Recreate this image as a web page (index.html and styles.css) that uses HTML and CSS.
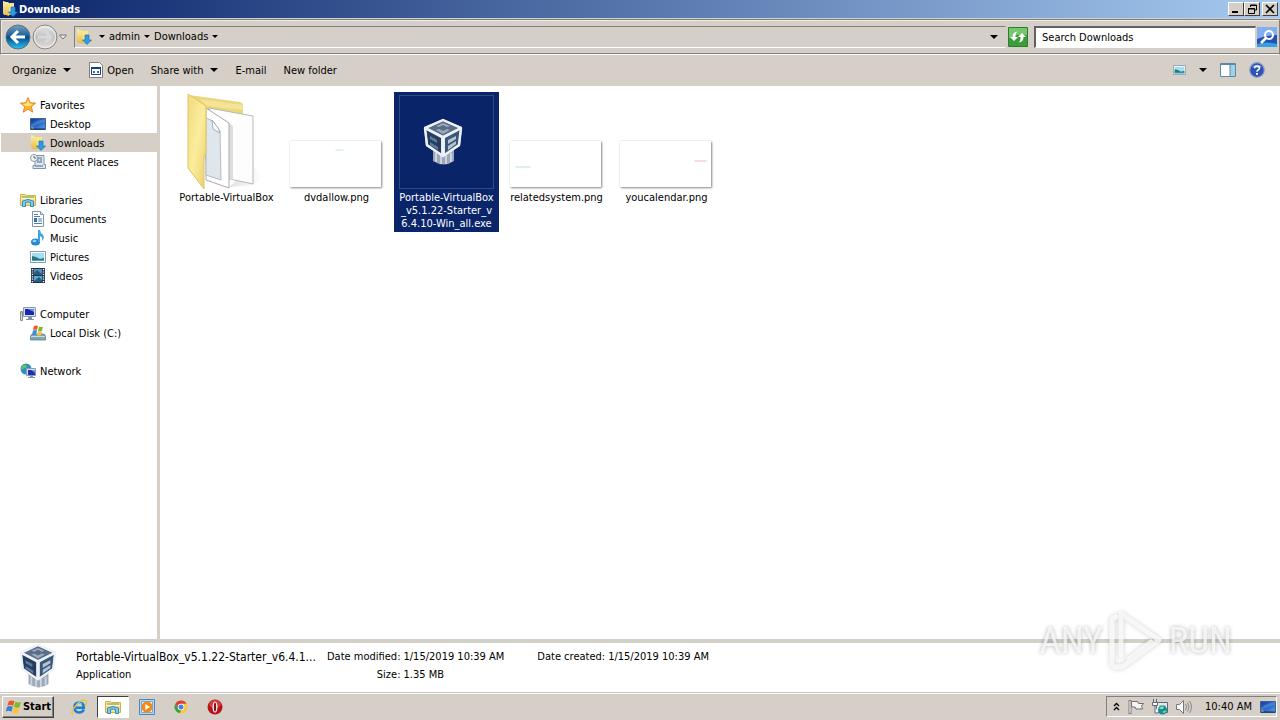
FILE: index.html
```html
<!DOCTYPE html>
<html lang="en">
<head>
<meta charset="utf-8">
<title>Downloads</title>
<link rel="stylesheet" href="styles.css">
</head>
<body>
<svg class="defs" aria-hidden="true">
  <defs>
    <linearGradient id="gFolder" x1="0" y1="0" x2="0" y2="1"><stop offset="0" stop-color="#fdf0a4"/><stop offset="1" stop-color="#e3bb45"/></linearGradient>
    <linearGradient id="gFront" x1="0" y1="0" x2="1" y2="1"><stop offset="0" stop-color="#f0da7c"/><stop offset=".5" stop-color="#fbed9e"/><stop offset="1" stop-color="#ecd06a"/></linearGradient>
    <linearGradient id="gBack" x1="0" y1="0" x2="0" y2="1"><stop offset="0" stop-color="#7da0b4"/><stop offset=".45" stop-color="#1a62a0"/><stop offset=".5" stop-color="#064684"/><stop offset="1" stop-color="#2cc4f4"/></linearGradient>
    <linearGradient id="gFwd" x1="0" y1="0" x2="0" y2="1"><stop offset="0" stop-color="#e8e8e8"/><stop offset=".5" stop-color="#c0c0c0"/><stop offset="1" stop-color="#e2e0dc"/></linearGradient>
    <linearGradient id="gScreen" x1="0" y1="0" x2="1" y2="1"><stop offset="0" stop-color="#123c98"/><stop offset=".6" stop-color="#2f6fd0"/><stop offset="1" stop-color="#5ea8e8"/></linearGradient>
    <linearGradient id="gShade" x1="0" y1="0" x2="1" y2="0"><stop offset="0" stop-color="#d4d4d4"/><stop offset="1" stop-color="#fff"/></linearGradient>
  </defs>
  <symbol id="downloads" viewBox="0 0 16 16">
    <path d="M2 1h4l1 1h5v12H2z" fill="#e8c558"/><path d="M1 0l6 2v13l-6-2z" fill="url(#gFolder)"/><path d="M7 2h5v11H7z" fill="#f9e58c"/>
    <path d="M9 6h4v5h2.500l-4.500 4.500L6.500 11H9z" fill="#2f9be0" stroke="#1573b8" stroke-width=".7"/>
  </symbol>
  <symbol id="star" viewBox="0 0 16 16"><path d="M8 .5l2.200 5.200 5.400.4-4.200 3.600 1.400 5.500L8 12.300l-4.800 2.900 1.400-5.500L.4 6.100l5.400-.4z" fill="#ffb52e" stroke="#d9771c" stroke-width=".8"/><path d="M8 2.500l1.400 4.100 3.500.3-3 2.100-5-.3-2-1.800 3.600-.3z" fill="#ffe37c"/></symbol>
  <symbol id="desktop" viewBox="0 0 16 16"><path d="M.5 2.500h15v11H.5z" fill="url(#gScreen)" stroke="#41618f"/><path d="M1 13h14" stroke="#14284c"/><path d="M1 9q6-5 14-6v3Q7 7 1 12z" fill="#72aef0" opacity=".35"/><path d="M1.500 12h2" stroke="#e8d060"/></symbol>
  <symbol id="recent" viewBox="0 0 16 16"><path d="M5 1.500h9v9h1.500v4H3v-3h2z" fill="#dce6ee" stroke="#8294a6"/><path d="M7 4h5M7 6h2m1 0h2M7 8h5M5 12h8" stroke="#4d6c8b"/><circle cx="4" cy="4" r="3.500" fill="#f3f6f8" stroke="#8696a5"/><path d="M4 2v2h2" stroke="#55677a" fill="none"/></symbol>
  <symbol id="libraries" viewBox="0 0 16 16"><path d="M.5 13.500V2.500h5l1 1h9v10z" fill="#f5df83" stroke="#d3b24e"/><path d="M2 5h12" stroke="#6fa36c"/><path d="M1 6.500h14" stroke="#fff6c4"/><path d="M2.500 14.500V9q5.500-3 11 0v5.500h-3v-4q-2.500-1-5 0v4z" fill="#7fcdf0" stroke="#3389ba"/></symbol>
  <symbol id="document" viewBox="0 0 16 16"><path d="M2.500.5h8l3 3v12h-11z" fill="#fff" stroke="#7d96b0"/><path d="M10.500.5v3h3" fill="#dce8f3" stroke="#7d96b0"/><path d="M4 3.500h4M4 5.500h6M8 8h4M8 10h4M4 12.500h8" stroke="#507bb0"/><path d="M4 7h3v4H4z" fill="#3270b2"/></symbol>
  <symbol id="music" viewBox="0 0 16 16"><ellipse cx="5.500" cy="12" rx="4.500" ry="3.500" fill="#2489d4"/><path d="M8 0h2q0 3 3 5 2 3-1 6 1-4-2-5v6H8z" fill="#3aa4e4"/><ellipse cx="4.500" cy="11" rx="2" ry="1.200" fill="#8fd4fa"/></symbol>
  <symbol id="picture" viewBox="0 0 16 16"><path d="M.5 2.500h15v11H.5z" fill="#fff" stroke="#829bad"/><path d="M2 4h12v8H2z" fill="#a5dcf2"/><path d="M2 7l4 1 4 2 4-1v3H2z" fill="#257a78"/><path d="M2 11h12v1H2z" fill="#3ba5cf"/></symbol>
  <symbol id="video" viewBox="0 0 16 16"><path d="M1 0h14v15H1z" fill="#223548"/><path d="M4 1h8v6H4z" fill="#4e92bd"/><path d="M4 8h8v6H4z" fill="#5aaad6"/><path d="M4 5l3-3 5 4v1H4zM4 13l5-4 3 3v2H4z" fill="#285c82"/><path d="M2.500 1v14M13.500 1v14" stroke="#e9eff3" stroke-width="1.400" stroke-dasharray="1.200 1.200"/></symbol>
  <symbol id="computer" viewBox="0 0 16 16"><path d="M3.500 1.500h12v9h-12z" fill="#d5deea" stroke="#8e9bb0"/><path d="M5 3h9v6H5z" fill="#1828b0"/><path d="M8 3h6v3z" fill="#6f8fe4"/><path d="M8 11h4v2H8zM6 13h8v1H6z" fill="#8391a8"/><path d="M.5 5.500h2v9h-2z" fill="#d4dbd4" stroke="#85908a"/><path d="M1 7h1" stroke="#4ab64e"/></symbol>
  <symbol id="disk" viewBox="0 0 16 16"><path d="M2 9h12l1.500 2v4H.5v-4z" fill="#7fa4b4" stroke="#557686" stroke-width=".7"/><path d="M1 11.500h14" stroke="#c9dfe5"/><path d="M11 13.500h3" stroke="#67dc6c"/><path d="M4 1q2-1 4 0L7 5Q5 4 3 5z" fill="#ee5a27"/><path d="M9 1.500q2 1 4 0L12 6Q10 7 8 6z" fill="#82b92f"/><path d="M3 5.500q2-1 4 0L6 10Q4 9 2 10z" fill="#3f8bd9"/><path d="M8 6.500q2 1 4 0L11 10Q9 11 7 10z" fill="#fac22e"/></symbol>
  <symbol id="network" viewBox="0 0 16 16"><circle cx="6" cy="6" r="5.500" fill="#2a8fc4"/><path d="M2 3q3-3 5 0-1 3-3 2-1 3-3 1zM7 7l4-2-1 5-3 1z" fill="#65bf62"/><path d="M6.500 5.500h9v7h-9z" fill="#d5deea" stroke="#8e9bb0"/><path d="M8 7h7v5H8z" fill="#1c30b8"/><path d="M11 7h4v3z" fill="#6f8fe4"/><path d="M10 13h3v1h2v1H8v-1h2z" fill="#8391a8"/></symbol>
  <symbol id="app" viewBox="0 0 16 16"><path d="M1.500.5h10l3 3v12h-13z" fill="#fff" stroke="#7e7e7e"/><path d="M3.500 5.500h9v7h-9z" fill="#fff" stroke="#173b8c"/><path d="M3 5h10v2H3z" fill="#173b8c"/><path d="M5 9h2v2H5zM9 9h2v2H9z" fill="#3a64b4"/></symbol>
  <symbol id="pane" viewBox="0 0 16 16"><path d="M.5 1.500h15v13H.5z" fill="#fff" stroke="#5b87a8"/><path d="M0 2.500h16" stroke="#5b87a8"/><path d="M10 3h5v11h-5z" fill="#9fd3ea"/><path d="M10 2v13" stroke="#5b87a8"/></symbol>
  <symbol id="help" viewBox="0 0 16 16"><circle cx="8" cy="8" r="7.300" fill="#2c51b8" stroke="#8fa0c4" stroke-width="1.200"/><path d="M3 5a6 5 0 0 1 10 0q-5 2-10 0z" fill="#7b98e4"/><path d="M5.600 6.200q.2-2.200 2.500-2.200t2.400 2q0 1.200-1.400 2Q8 8.600 8 9.800" fill="none" stroke="#fff" stroke-width="1.600"/><path d="M7 11h2v1.800H7z" fill="#fff"/></symbol>
  <symbol id="flag" viewBox="0 0 16 16"><path d="M2 1v14" stroke="#7c7c7c" stroke-width="3"/><path d="M2 2v12" stroke="#fff"/><path d="M3.500 2.500h6l1 2h5l-2 2.500 1 3H8l-1-2H3.500z" fill="#f5f5f5" stroke="#6e6e6e"/></symbol>
  <symbol id="plug" viewBox="0 0 16 16"><path d="M4.500 3.500h11v10h-11z" fill="#e3eaee" stroke="#5a6972"/><path d="M7 6h7v6H7z" fill="#b9cdd7"/><circle cx="10.500" cy="11" r="4.500" fill="#168c8c"/><path d="M7 10q2-4 5-2-1 3-3 2zM10 13l4-2-1 3z" fill="#7be0b6"/><path d="M1.500 0v3M4.500 0v3M.5 3.500h5v3h-5zM3 6v8h3" fill="#fff" stroke="#5a6972"/></symbol>
  <symbol id="sound" viewBox="0 0 16 16"><path d="M.5 5.500h3l4-4v13l-4-4h-3z" fill="#fafafa" stroke="#777"/><path d="M9.500 5q2 3 0 6M11.500 3.500q3 4.500 0 9M13.500 2q4 6 0 12" fill="none" stroke="#888"/></symbol>
  <symbol id="win" viewBox="0 0 18 16"><path d="M4 2q3-2 6 0L8.500 7q-3-2-6 0z" fill="#ef5722"/><path d="M11 2.500q3 1.500 6 0L15.500 8q-3 1.500-6 0z" fill="#7fb92b"/><path d="M2.200 8q3-2 6 0L6.800 13q-3-2-6 0z" fill="#317fdc"/><path d="M9.200 8.800q3 1.500 6 0L13.800 14q-3 1.500-6 0z" fill="#ffc526"/></symbol>
  <symbol id="ie" viewBox="0 0 16 16"><path d="M12.800 10.500Q11.500 13.500 8 13.500 3.500 13.500 3.500 8.500T8.300 3.500Q12.800 3.500 12.800 8.700H5" fill="none" stroke="#1b7fd0" stroke-width="2.600"/><path d="M2 15.500Q-1 13 5 6.500t9.500-5Q16.500 3 14 7" fill="none" stroke="#eabf39" stroke-width="1.300"/><path d="M5 5.500q3-3 6-.5" stroke="#8bd2fa" fill="none"/></symbol>
  <symbol id="player" viewBox="0 0 16 16"><path d="M.5.5h15v15H.5z" fill="#b9d7f0" stroke="#4b86bd"/><path d="M2.500 2.500h11v11h-11z" fill="#e4eff8" stroke="#79a8d0"/><circle cx="8" cy="8" r="5.500" fill="#f18a12"/><path d="M6.300 5l4.700 3-4.700 3z" fill="#fff"/></symbol>
  <symbol id="chrome" viewBox="0 0 16 16"><circle cx="8" cy="8" r="6.500" fill="#fcc934"/><path d="M2.400 4.700A6.500 6.500 0 0 1 13.600 4.700H8L5.100 9.600z" fill="#df4034"/><path d="M2.400 4.700L6 10l2 1.500-1.500 2.800A6.500 6.500 0 0 1 2.400 4.700z" fill="#36a14b"/><circle cx="8" cy="8" r="3.300" fill="#fff"/><circle cx="8" cy="8" r="2.500" fill="#4380e8"/></symbol>
  <symbol id="opera" viewBox="0 0 16 16"><circle cx="8" cy="8" r="7.500" fill="#b81418"/><ellipse cx="8" cy="5" rx="6" ry="4" fill="#df575a" opacity=".6"/><ellipse cx="8" cy="8" rx="2.500" ry="5.500" fill="#fff"/><ellipse cx="8" cy="8" rx="1.200" ry="4.500" fill="#8b1013"/></symbol>
  <symbol id="vbox" viewBox="0 0 42 48">
    <path d="M11 31h21v12q-10 7-21 0z" fill="#9ca8ba"/><path d="M14 35v9M19 37v9M24 37v9M29 35v9" stroke="#ccd3de" stroke-width="2"/>
    <path d="M21 1L2 9l2 19 17 11 17-11 2-19z" fill="#e4e8ef"/>
    <path d="M21 3L6 10l15 8 16-8z" fill="#5b6e88"/><path d="M4 12l15 8v16L6 27z" fill="#263d5e"/><path d="M38 12l-15 8v16l13-9z" fill="#3c5879"/>
    <path d="M14 8l7-3 7 3-3 1-4-2-4 2z" fill="#9aaabd"/><path d="M14 12l3-1 4 2 4-2 3 1-7 4z" fill="#9aaabd"/>
    <path d="M8 18l7 4v3l-7-4zM8 24l8 5v3l-8-5z" fill="#5c7d9e"/><path d="M26 22l8-4v3l-8 5zM26 28l8-5v3l-8 6z" fill="#b4c4d4"/>
    <path d="M21 19v19M3 10l18 9 18-9M21 2L3 10l2 17 16 11 16-11 2-17z" stroke="#eef1f6" stroke-width="2.400" stroke-linejoin="round" fill="none"/>
  </symbol>
</svg>

<div class="desktop">
  <header class="titlebar">
    <svg class="icon"><use href="#downloads"/></svg>
    <h1 class="title">Downloads</h1>
    <div class="winbtns">
      <button class="winbtn" aria-label="Minimize"><svg viewBox="0 0 12 10"><path d="M2 8h6" stroke="#000" stroke-width="2"/></svg></button>
      <button class="winbtn" aria-label="Restore"><svg viewBox="0 0 12 10"><path d="M4.500 3V1h6v5H9M4 1.500h7M2.500 4.500h6v5h-6zM2 5h7" stroke="#000" fill="none"/></svg></button>
      <button class="winbtn close" aria-label="Close"><svg viewBox="0 0 12 10"><path d="M2 1l8 8M10 1L2 9" stroke="#000" stroke-width="1.600"/></svg></button>
    </div>
  </header>

  <nav class="navbar">
    <div class="history">
      <button class="round" aria-label="Back"><svg viewBox="0 0 26 26"><circle cx="13" cy="13" r="12" fill="url(#gBack)" stroke="#50738c"/><path d="M20 13H8M13 7l-6 6 6 6" fill="none" stroke="#fff" stroke-width="3"/></svg></button>
      <button class="round" aria-label="Forward"><svg viewBox="0 0 26 26"><circle cx="13" cy="13" r="12" fill="url(#gFwd)" stroke="#888"/><circle cx="13" cy="13" r="10.500" fill="none" stroke="#eee"/><path d="M6 13h12M13 7l6 6-6 6" fill="none" stroke="#d8d8d8" stroke-width="3"/></svg></button>
      <button class="plain" aria-label="Recent pages"><svg class="tri" viewBox="0 0 8 6"><path d="M.5 1h7L4 5z" fill="#eee" stroke="#777"/></svg></button>
    </div>
    <div class="address">
      <svg class="icon"><use href="#downloads"/></svg>
      <svg class="arrow" viewBox="0 0 6 4"><path d="M0 0h6L3 3z"/></svg>
      <button class="plain">admin</button>
      <svg class="arrow" viewBox="0 0 6 4"><path d="M0 0h6L3 3z"/></svg>
      <button class="plain">Downloads</button>
      <svg class="arrow" viewBox="0 0 6 4"><path d="M0 0h6L3 3z"/></svg>
      <button class="plain history-drop" aria-label="Previous locations"><svg class="arrow-lg" viewBox="0 0 8 4"><path d="M0 0h8L4 4z"/></svg></button>
    </div>
    <button class="square" aria-label="Refresh"><svg viewBox="0 0 20 20"><path d="M.5.5h19v19H.5z" fill="#3b9c3b" stroke="#2b7c35"/><path d="M1 1h18v7Q10 6 1 11z" fill="#78c66c"/><path d="M6 14l-4-4h2.500q0-5 5-5.500Q7 6.500 7.500 10H10zM14 6l4 4h-2.500q0 5-5 5.500 2.500-2 2-5.500H10z" fill="#fff"/></svg></button>
    <div class="search">
      <input type="text" aria-label="Search Downloads" placeholder="Search Downloads">
      <button class="square" aria-label="Search"><svg viewBox="0 0 20 20"><path d="M0 0h20v20H0z" fill="#2450b4"/><path d="M0 0h20v8Q10 8 0 12z" fill="#83aef0"/><path d="M0 20v-3q10-3 20 0v3z" fill="#35a1e4"/><circle cx="12" cy="8" r="4" fill="none" stroke="#fff" stroke-width="2"/><path d="M9 11l-5 5" stroke="#fff" stroke-width="2.500"/></svg></button>
    </div>
  </nav>

  <div class="toolbar">
    <button class="tool">Organize <svg class="arrow-lg" viewBox="0 0 8 4"><path d="M0 0h8L4 4z"/></svg></button>
    <button class="tool open"><svg class="icon"><use href="#app"/></svg>Open</button>
    <button class="tool">Share with <svg class="arrow-lg" viewBox="0 0 8 4"><path d="M0 0h8L4 4z"/></svg></button>
    <button class="tool">E-mail</button>
    <button class="tool">New folder</button>
    <div class="views">
      <button class="plain" aria-label="Change view"><svg class="icon-sm"><use href="#picture"/></svg></button>
      <button class="plain" aria-label="More views"><svg class="arrow-lg" viewBox="0 0 8 4"><path d="M0 0h8L4 4z"/></svg></button>
      <button class="plain" aria-label="Preview pane"><svg class="icon"><use href="#pane"/></svg></button>
      <button class="plain" aria-label="Help"><svg class="icon"><use href="#help"/></svg></button>
    </div>
  </div>

  <div class="body">
    <aside class="tree">
      <ul class="group">
        <li class="node"><svg class="icon"><use href="#star"/></svg><span>Favorites</span></li>
        <li class="node child"><svg class="icon"><use href="#desktop"/></svg><span>Desktop</span></li>
        <li class="node child current"><svg class="icon"><use href="#downloads"/></svg><span>Downloads</span></li>
        <li class="node child"><svg class="icon"><use href="#recent"/></svg><span>Recent Places</span></li>
      </ul>
      <ul class="group">
        <li class="node"><svg class="icon"><use href="#libraries"/></svg><span>Libraries</span></li>
        <li class="node child"><svg class="icon"><use href="#document"/></svg><span>Documents</span></li>
        <li class="node child"><svg class="icon"><use href="#music"/></svg><span>Music</span></li>
        <li class="node child"><svg class="icon"><use href="#picture"/></svg><span>Pictures</span></li>
        <li class="node child"><svg class="icon"><use href="#video"/></svg><span>Videos</span></li>
      </ul>
      <ul class="group">
        <li class="node"><svg class="icon"><use href="#computer"/></svg><span>Computer</span></li>
        <li class="node child"><svg class="icon"><use href="#disk"/></svg><span>Local Disk (C:)</span></li>
      </ul>
      <ul class="group">
        <li class="node"><svg class="icon"><use href="#network"/></svg><span>Network</span></li>
      </ul>
    </aside>
    <main class="files">
      <figure class="file">
        <div class="preview">
          <svg class="folder" viewBox="0 0 96 96">
            <path d="M74 72l10 12-10 7-24 2z" fill="url(#gShade)" opacity=".7"/>
            <path d="M10 1l51 7 3 2v60H27z" fill="#ecd67c"/><path d="M28 12l36 4v-5L20 5z" fill="#f4e498"/>
            <path d="M30 14l44 8v68L46 84z" fill="#fdfdfd" stroke="#b8b8b8"/><path d="M50 29l4 3v54l-4-1z" fill="#ddd"/>
            <path d="M27 14l23 15v65L27 86z" fill="#fff" stroke="#a9a9a9"/>
            <path d="M27 24l7 3 7 10 1 49-15-5z" fill="#dfe6ec" stroke="#b4bcc4"/><path d="M33 26l1 9 7 4-2-5z" fill="#fff" stroke="#a8b0b8"/>
            <path d="M9 0l18 12v47l-2 4v32L9 74z" fill="url(#gFront)" stroke="#e0c565"/>
          </svg>
        </div>
        <figcaption>Portable-VirtualBox</figcaption>
      </figure>
      <figure class="file">
        <div class="preview"><svg class="thumb" viewBox="0 0 90 46"><path d="M45 9h8" stroke="#bfe5e5"/></svg></div>
        <figcaption>dvdallow.png</figcaption>
      </figure>
      <figure class="file selected">
        <div class="preview framed"><svg class="exe"><use href="#vbox"/></svg></div>
        <figcaption>Portable-VirtualBox<br>_v5.1.22-Starter_v<br>6.4.10-Win_all.exe</figcaption>
      </figure>
      <figure class="file">
        <div class="preview"><svg class="thumb" viewBox="0 0 90 46"><path d="M5 26h15" stroke="#b5e0e0"/></svg></div>
        <figcaption>relatedsystem.png</figcaption>
      </figure>
      <figure class="file">
        <div class="preview"><svg class="thumb" viewBox="0 0 90 46"><path d="M74 20h12" stroke="#f0b8c4"/></svg></div>
        <figcaption>youcalendar.png</figcaption>
      </figure>
    </main>
  </div>

  <section class="details">
    <svg class="details-icon"><use href="#vbox"/></svg>
    <div class="summary">
      <div class="name">Portable-VirtualBox_v5.1.22-Starter_v6.4.1...</div>
      <div>Application</div>
    </div>
    <dl class="props">
      <dt>Date modified:</dt><dd>1/15/2019 10:39 AM</dd>
      <dt>Size:</dt><dd>1.35 MB</dd>
    </dl>
    <dl class="props">
      <dt>Date created:</dt><dd>1/15/2019 10:39 AM</dd>
    </dl>
  </section>

  <footer class="taskbar">
    <button class="start"><svg class="winlogo"><use href="#win"/></svg>Start</button>
    <div class="tasks">
      <button class="task" aria-label="Internet Explorer"><svg class="icon"><use href="#ie"/></svg></button>
      <button class="task active" aria-label="Windows Explorer"><svg class="icon"><use href="#libraries"/></svg></button>
      <button class="task" aria-label="Media Player"><svg class="icon"><use href="#player"/></svg></button>
      <button class="task" aria-label="Chrome"><svg class="icon"><use href="#chrome"/></svg></button>
      <button class="task" aria-label="Opera"><svg class="icon"><use href="#opera"/></svg></button>
    </div>
    <div class="tray">
      <svg class="chev" viewBox="0 0 7 9"><path d="M1 4l2.500-2.500L6 4M1 8l2.500-2.500L6 8" fill="none" stroke="#000" stroke-width="1.300"/></svg>
      <svg class="icon"><use href="#flag"/></svg>
      <svg class="icon"><use href="#plug"/></svg>
      <svg class="icon"><use href="#sound"/></svg>
      <time class="clock">10:40 AM</time>
      <svg class="icon"><use href="#desktop"/></svg>
    </div>
  </footer>

  <div class="watermark">
    <span>ANY</span>
    <svg class="play" viewBox="0 0 58 64"><path d="M5 55V12q0-3 4-4M14 46V5l38 26-37 27-7 0M22 50l22-17" fill="none" stroke="#fff" stroke-opacity=".75" stroke-width="5" stroke-linejoin="round" stroke-linecap="round"/></svg>
    <span>RUN</span>
  </div>
</div>
</body>
</html>
```

FILE: styles.css
```css
* { box-sizing: border-box; }
body {
  margin: 0;
  font: 11px/13px "DejaVu Sans Condensed", "DejaVu Sans", sans-serif;
  color: #000;
  background: #d5cfc7;
}
button { font: inherit; color: inherit; border: 0; padding: 0; background: none; display: flex; align-items: center; justify-content: center; }
ul, dl, dd, figure, h1 { margin: 0; padding: 0; }
svg { display: block; flex: none; }
.defs { position: absolute; width: 0; height: 0; }
.icon { width: 16px; height: 16px; }
.icon-sm { width: 13px; height: 14px; }
.arrow { width: 6px; height: 4px; }
.arrow-lg { width: 8px; height: 4px; }

.desktop { position: relative; min-height: 100vh; display: flex; flex-direction: column; }

.titlebar { height: 18px; display: flex; align-items: center; padding: 0 2px; background: linear-gradient(90deg, #0a246a, #a6caf0); }
.title { flex: 1; margin-left: 1px; font-size: 11px; font-weight: bold; color: #fff; }
.winbtns { display: flex; }
.winbtn { width: 16px; height: 14px; background: #d5cfc7; border: 1px solid; border-color: #fff #404040 #404040 #fff; }
.winbtn svg { width: 12px; height: 10px; }
.close { margin-left: 2px; }

.navbar { height: 36px; display: flex; align-items: center; border: 1px solid #808080; border-bottom-color: #fff; box-shadow: inset 0 -1px #808080, inset 1px 1px #eeebe6; margin-top: 1px; padding: 0 2px 1px 4px; }
.history { display: flex; align-items: center; gap: 1px; width: 69px; }
.round svg { width: 26px; height: 26px; }
.tri { width: 8px; height: 6px; }
.address { flex: 1; height: 22px; display: flex; align-items: center; gap: 4px; border: 1px solid; border-color: #808080 #d5cfc7 #fff #808080; }
.address .icon { margin: 0 3px 0 1px; }
.history-drop { margin: 0 7px 0 auto; }
.square svg { width: 20px; height: 20px; }
.address + .square { margin: 0 6px 0 2px; }
.search { display: flex; align-items: center; gap: 1px; }
.search input { width: 222px; height: 22px; font: inherit; padding: 0 6px; background: #fff; border: 1px solid; border-width: 2px 1px 1px 2px; border-color: #606060 #d5cfc7 #fff #606060; border-radius: 0; }
.search input::placeholder { color: #000; opacity: 1; }

.toolbar { height: 31px; display: flex; align-items: center; padding: 0 15px 1px 12px; gap: 17px; }
.tool { gap: 7px; }
.open { gap: 3px; }
.views { margin-left: auto; display: flex; gap: 13px; }

.body { flex: 1; display: flex; background: #fff; }
.tree { width: 160px; padding: 9px 0 0 1px; border-right: 3px solid #d5cfc7; display: flex; flex-direction: column; gap: 19px; }
.group { list-style: none; }
.node { height: 19px; display: flex; align-items: center; gap: 4px; padding-left: 19px; }
.node span { padding-top: 2px; }
.child { padding-left: 29px; }
.current { background: #d5cfc7; }
.files { flex: 1; display: flex; flex-wrap: wrap; align-items: flex-start; align-content: flex-start; gap: 5px; padding: 6px 14px; }
.file { width: 105px; padding: 2px; text-align: center; }
.preview { height: 96px; display: flex; align-items: flex-end; justify-content: center; margin-bottom: 1px; }
.folder { width: 96px; height: 96px; }
.thumb { width: 91px; height: 46px; margin: 0 2px 3px 0; background: #fff; box-shadow: 1px 1px 2px #888, 0 0 1px #ccc; }
.selected { background: #0a246a; color: #fff; }
.framed { width: 95px; height: 94px; margin: 1px auto 2px; align-items: center; border: 1px solid #2d4a86; }
.exe { width: 42px; height: 48px; margin-right: 8px; }

.details { height: 54px; display: flex; background: #fff; border-top: 4px solid #d3d0c8; border-bottom: 1px solid #c8c8c4; line-height: 18px; padding: 0 18px; }
.details-icon { width: 40px; height: 46px; }
.summary { width: 251px; margin-left: 18px; padding-top: 5px; white-space: nowrap; }
.name { font-size: 12px; }
.props { display: grid; grid-template-columns: auto auto; grid-auto-rows: 18px; column-gap: 3px; padding-top: 5px; margin-right: 33px; white-space: nowrap; }
.props dt { text-align: right; }

.taskbar { height: 27px; display: flex; align-items: center; padding: 1px 3px 2px 2px; border-top: 1px solid #fff; }
.start { width: 52px; height: 22px; gap: 1px; font-weight: bold; border: 1px solid; border-color: #fff #404040 #404040 #fff; box-shadow: inset -1px -1px #808080; }
.winlogo { width: 17px; height: 16px; }
.tasks { display: flex; gap: 2px; margin-left: 9px; }
.task { width: 32px; height: 22px; border: 1px solid transparent; }
.active { background: #fff; border-color: #404040 #fff #fff #404040; }
.tray { margin-left: auto; height: 21px; display: flex; align-items: center; gap: 8px; padding: 0 0 0 6px; border: 1px solid; border-color: #808080 #fff #fff #808080; }
.chev { width: 7px; height: 9px; }
.clock { margin-left: 5px; }

.watermark { position: absolute; right: 48px; bottom: 47px; display: flex; align-items: center; gap: 4px; font: 37px/64px "Liberation Sans Narrow", "Roboto Condensed", "Liberation Sans", sans-serif; color: rgba(255, 255, 255, .75); text-shadow: 0 0 4px rgba(0, 0, 0, .3); }
.play { width: 58px; height: 64px; filter: drop-shadow(0 0 2px rgba(0, 0, 0, .25)); }
```
